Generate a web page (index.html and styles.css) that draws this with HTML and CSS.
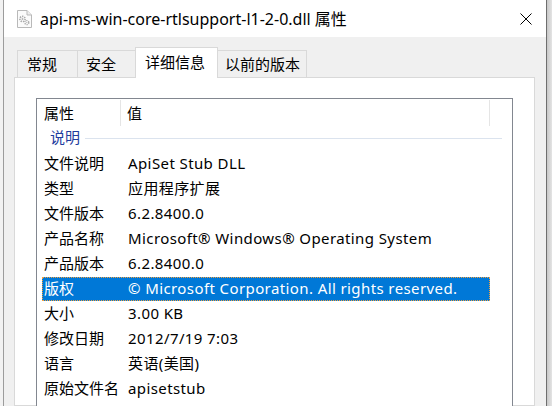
FILE: index.html
```html
<!DOCTYPE html>
<html lang="zh-CN">
<head>
<meta charset="utf-8">
<title>属性</title>
<link rel="stylesheet" href="styles.css">
</head>
<body>
<div class="screen">
  <div class="edge-left"></div>
  <div class="window">
    <div class="titlebar">
      <svg class="file-icon" width="15" height="18" viewBox="0 0 15 18">
        <path d="M0.5 0.5 H10 L14.5 5 V17.5 H0.5 Z" fill="#fbfbfb" stroke="#b9b9b9"/>
        <path d="M10 0.5 V5 H14.5" fill="#eeeeee" stroke="#b9b9b9"/>
        <circle cx="5.5" cy="9" r="2.6" fill="none" stroke="#a8a8a8" stroke-width="1.6" stroke-dasharray="1.3 1"/>
        <circle cx="5.5" cy="9" r="1" fill="#b5b5b5"/>
        <circle cx="9.8" cy="12.6" r="2" fill="none" stroke="#a8a8a8" stroke-width="1.4" stroke-dasharray="1.1 0.9"/>
        <circle cx="9.8" cy="12.6" r="0.7" fill="#b5b5b5"/>
      </svg>
      <span class="title">api-ms-win-core-rtlsupport-l1-2-0.dll 属性</span>
      <svg class="close" width="12" height="12" viewBox="0 0 12 12">
        <path d="M0.5 0.5 L11.5 11.5 M11.5 0.5 L0.5 11.5" stroke="#000" stroke-width="1"/>
      </svg>
    </div>
    <div class="body">
      <div class="tabs">
        <div class="tab tab-1">常规</div>
        <div class="tab tab-2">安全</div>
        <div class="tab tab-3 selected">详细信息</div>
        <div class="tab tab-4">以前的版本</div>
      </div>
      <div class="panel">
        <div class="list">
          <div class="header">
            <div class="hcol hcol1">属性</div>
            <div class="hcol hcol2">值</div>
          </div>
          <div class="group"><span class="group-name">说明</span><i class="group-line"></i></div>
          <div class="row"><span class="c1">文件说明</span><span class="c2">ApiSet Stub DLL</span></div>
          <div class="row"><span class="c1">类型</span><span class="c2">应用程序扩展</span></div>
          <div class="row"><span class="c1">文件版本</span><span class="c2">6.2.8400.0</span></div>
          <div class="row"><span class="c1">产品名称</span><span class="c2">Microsoft® Windows® Operating System</span></div>
          <div class="row"><span class="c1">产品版本</span><span class="c2">6.2.8400.0</span></div>
          <div class="row selected"><span class="c1">版权</span><span class="c2">© Microsoft Corporation. All rights reserved.</span></div>
          <div class="row"><span class="c1">大小</span><span class="c2">3.00 KB</span></div>
          <div class="row"><span class="c1">修改日期</span><span class="c2">2012/7/19 7:03</span></div>
          <div class="row"><span class="c1">语言</span><span class="c2">英语(美国)</span></div>
          <div class="row"><span class="c1">原始文件名</span><span class="c2">apisetstub</span></div>
        </div>
      </div>
    </div>
  </div>
  <div class="behind"></div>
</div>
</body>
</html>
```

FILE: styles.css
```css
html, body {
  margin: 0;
  padding: 0;
}
body {
  font-family: "Noto Sans", "Noto Sans CJK SC", sans-serif;
  font-size: 15px;
  color: #000;
  background: #f2f2f2;
}
.screen {
  display: flex;
  height: 406px;
  overflow: hidden;
  background: #f2f2f2;
}
.edge-left {
  width: 3px;
  flex: none;
}
.window {
  width: 544px;
  flex: none;
  box-sizing: border-box;
  border-left: 1px solid #9c9c9c;
  border-right: 1px solid #6e6e6e;
  display: flex;
  flex-direction: column;
}
.behind {
  flex: 1;
  background: linear-gradient(to right, #c8c8c8, #e4e4e4);
}
.titlebar {
  height: 37px;
  flex: none;
  background: #fff;
  display: flex;
  align-items: center;
}
.file-icon {
  margin-left: 13px;
  flex: none;
}
.title {
  margin-left: 8px;
  font-size: 16px;
  line-height: 20px;
  white-space: nowrap;
}
.close {
  margin-left: auto;
  margin-right: 14px;
  flex: none;
}
.body {
  flex: 1;
  background: #f0f0f0;
  padding: 10px 11px 0 10px;
  display: flex;
  flex-direction: column;
  min-height: 0;
}
.tabs {
  display: flex;
  align-items: flex-end;
  height: 30px;
  margin-left: 3px;
  position: relative;
  z-index: 1;
  flex: none;
}
.tab {
  height: 27px;
  box-sizing: border-box;
  border-top: 1px solid #d9d9d9;
  border-left: 1px solid #d9d9d9;
  background: #f0f0f0;
  line-height: 26px;
  white-space: nowrap;
}
.tab-1 { width: 60px; padding-left: 9px; }
.tab-2 { width: 58px; padding-left: 8px; }
.tab-3 { width: 83px; padding-left: 9px; }
.tab-4 {
  width: 89px;
  padding-left: 7px;
  border-left: none;
  border-right: 1px solid #d9d9d9;
}
.tab.selected {
  height: 31px;
  margin-bottom: -1px;
  background: #fff;
  border-right: 1px solid #d9d9d9;
  line-height: 28px;
}
.panel {
  flex: 1;
  background: #fff;
  border: 1px solid #d9d9d9;
  padding: 20px 0 0 21px;
  min-height: 0;
}
.list {
  width: 477px;
  height: 400px;
  box-sizing: border-box;
  border: 1px solid #828790;
  background: #fff;
}
.header {
  display: flex;
  height: 27px;
  padding-top: 1px;
  box-sizing: border-box;
}
.hcol {
  height: 26px;
  line-height: 26px;
  box-sizing: border-box;
  border-right: 1px solid #e5e5e5;
}
.hcol1 { width: 84px; padding-left: 7px; }
.hcol2 { width: 369px; padding-left: 6px; }
.group {
  height: 25px;
  box-sizing: border-box;
  display: flex;
  align-items: center;
  padding: 0 10px 3px 13px;
}
.group-name {
  color: #1e3c9e;
  line-height: 20px;
}
.group-line {
  flex: 1;
  height: 1px;
  margin-left: 5px;
  margin-top: 2px;
  background: #dbe3ee;
}
.row {
  display: flex;
  align-items: center;
  width: 448px;
  height: 24px;
  margin: 1px 0 0 5px;
  box-sizing: border-box;
  border: 1px solid transparent;
  line-height: 21px;
  padding-bottom: 1px;
  white-space: nowrap;
}
.row .c1 {
  width: 85px;
  padding-left: 1px;
  box-sizing: border-box;
  flex: none;
}
.row .c2 {
  letter-spacing: 0.4px;
}
.row.selected {
  background: #0078d7;
  color: #fff;
  border: 1px dotted #f0a040;
}
```
